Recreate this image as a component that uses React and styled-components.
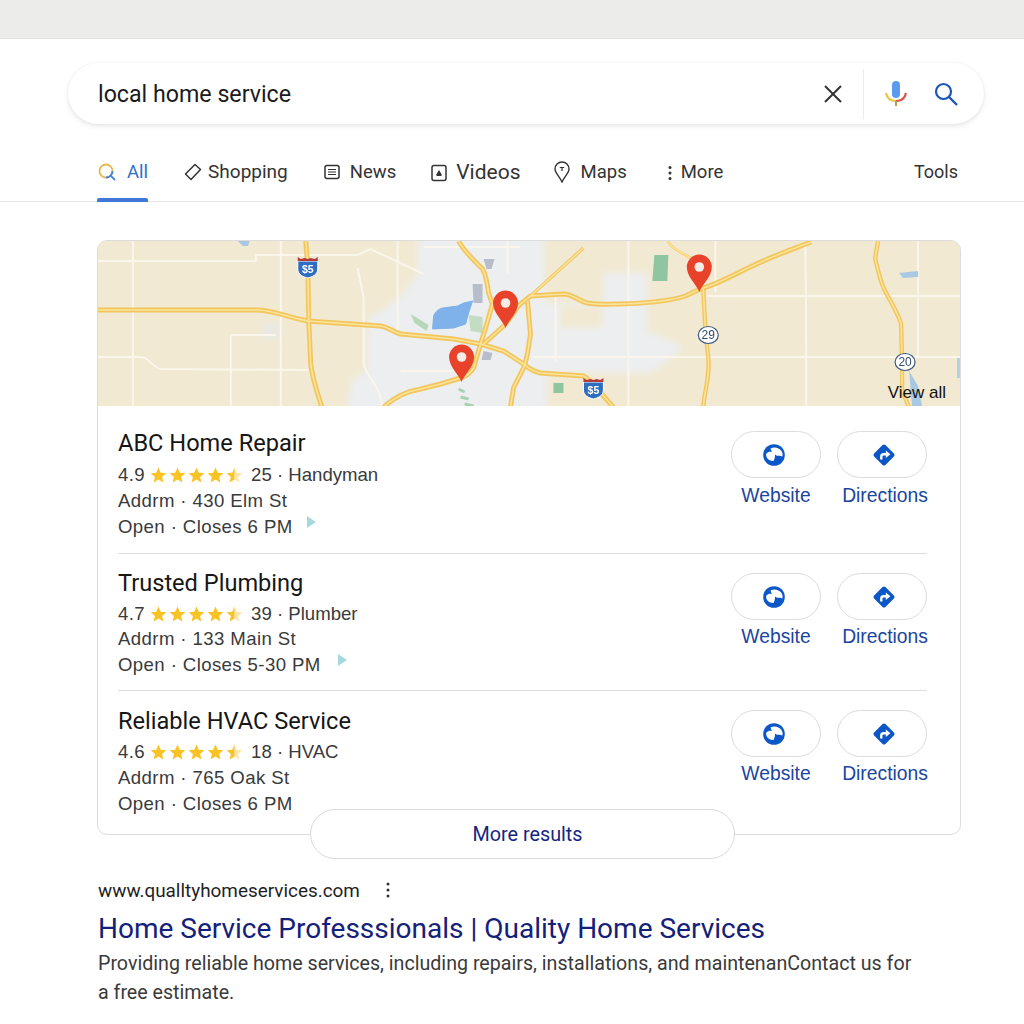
import React from "react";
import styled, { createGlobalStyle } from "styled-components";

const Global = createGlobalStyle`
  html, body { margin: 0; padding: 0; background: #fff; }
  body { font-family: Roboto, "Liberation Sans", sans-serif; color: #222; }
  * { box-sizing: border-box; }
`;

const Page = styled.div`width: 1024px; height: 1024px; overflow: hidden; background: #fff;`;
const TopStrip = styled.div`height: 39px; background: #ececeb; border-bottom: 1px solid #e2e2e2;`;
const SearchWrap = styled.div`padding: 24px 40px 0 68px;`;
const SearchBar = styled.div`
  height: 61px; border-radius: 31px; background: #fff; display: flex; align-items: center;
  padding: 0 26px 0 30px;
  box-shadow: 0 2px 5px rgba(60, 64, 67, 0.13), 0 0 2px rgba(60, 64, 67, 0.05);
`;
const Query = styled.div`flex: 1; font-size: 23.2px; color: #1b1b1b;`;
const ClearBtn = styled.div`display: flex; width: 20px; margin-right: 20px;`;
const VDivider = styled.div`width: 1px; height: 50px; background: #ececec; margin-right: 20px;`;
const MicBtn = styled.div`display: flex; margin-right: 26px;`;
const SearchBtn = styled.div`display: flex;`;

const Tabs = styled.nav`
  height: 78px; display: flex; align-items: flex-start; gap: 36px;
  padding: 30px 66px 0 98px; border-bottom: 1px solid #e6e6e6;
`;
const Tab = styled.div`
  position: relative; height: 48px; display: flex; align-items: flex-start; gap: ${p => p.$gap || 9}px;
  font-size: ${p => p.$size || 18.5}px; line-height: 36px; color: ${p => p.$active ? "#2f6fc9" : "#333"};
  margin-left: ${p => p.$push ? "auto" : `${p.$ml || 0}px`};
  svg { margin-top: ${p => p.$iconTop ?? 9}px; flex: none; }
`;
const Underline = styled.div`
  position: absolute; left: -1px; right: 0; bottom: 0; height: 4px; border-radius: 2px 2px 0 0; background: #3f78d8;
`;

const Main = styled.main`padding: 38px 63px 0 97px;`;
const Card = styled.section`border: 1px solid #dcdcdc; border-radius: 10px; overflow: hidden; background: #fff;`;
const MapWrap = styled.div`position: relative; height: 165px; background: #f1e9d2; overflow: hidden;`;
const MapSvg = styled.svg`display: block; width: 100%; height: 100%; filter: blur(0.4px);`;
const ViewAll = styled.div`position: absolute; right: 14px; bottom: 3px; font: 17px/20px "Liberation Sans", sans-serif; color: #111;`;

const Row = styled.article`
  height: ${p => p.$h}px; margin: 0 33px 0 20px; display: flex; justify-content: space-between;
  padding-top: ${p => p.$top}px; border-bottom: ${p => p.$last ? "none" : "1px solid #dedede"};
`;
const Info = styled.div`display: flex; flex-direction: column;`;
const Name = styled.h3`margin: 0 0 ${p => p.$mb}px; font-size: 23.6px; line-height: 30px; font-weight: 400; color: #161616;`;
const Line = styled.div`
  display: flex; align-items: center; font: 18.6px/26px "Liberation Sans", sans-serif; color: #3a3a3a; letter-spacing: 0.4px;
  margin-bottom: ${p => p.$mb || 0}px;
`;
const Rest = styled.span`letter-spacing: 0;`;
const Stars = styled.span`display: inline-flex; margin: 0 7px 0 4px;`;
const Arrow = styled.span`
  display: inline-block; margin: -10px 0 0 ${p => p.$gap || 15}px;
  border-left: 9px solid #a6d8de; border-top: 6px solid transparent; border-bottom: 6px solid transparent;
`;
const Actions = styled.div`display: flex; gap: 16px; margin-top: ${p => p.$mt}px;`;
const Action = styled.div`display: flex; flex-direction: column; align-items: center; width: 90px;`;
const Pill = styled.div`
  width: 90px; height: 47px; border: 1px solid #dcdcdc; border-radius: 24px; background: #fff;
  display: flex; align-items: center; justify-content: center;
  padding-left: ${p => p.$dx > 0 ? p.$dx * 2 : 0}px; padding-right: ${p => p.$dx < 0 ? -p.$dx * 2 : 0}px;
`;
const ActionLabel = styled.div`
  margin: ${p => p.$gap}px 0 0 ${p => p.$shift || 0}px; font: 19.3px/22px "Liberation Sans", sans-serif; color: #1a45a0; white-space: nowrap;
`;

const MoreWrap = styled.div`position: relative; display: flex; justify-content: center; margin-top: -26px; padding-right: 13px;`;
const MoreBtn = styled.div`
  width: 425px; height: 50px; border: 1px solid #d9d9d9; border-radius: 25px; background: #fff; padding-left: 10px;
  display: flex; align-items: center; justify-content: center; font-size: 19.8px; color: #16257f;
`;

const Result = styled.div`margin: 17px 0 0 1px;`;
const UrlRow = styled.div`display: flex; align-items: center; gap: 26px; height: 28px;`;
const Url = styled.div`font-size: 18.9px; color: #1f1f1f;`;
const Title = styled.h2`margin: 7px 0 0; font-size: 28px; line-height: 36px; font-weight: 400; color: #14217a; white-space: nowrap;`;
const Snippet = styled.p`margin: 2px 0 0; width: 825px; font-size: 19.65px; line-height: 29px; color: #3a3a3a;`;

const StarIcon = ({ half }) => (
  <svg width="19" height="18" viewBox="0 0 24 24">
    {half ? (
      <>
        <path d="M12 2l3 6.9 7.5.7-5.7 5 1.7 7.4L12 18z" fill="#fbe7ae" />
        <path d="M12 2L9 8.9l-7.5.7 5.7 5-1.7 7.4L12 18z" fill="#f9c326" />
      </>
    ) : (
      <path d="M12 2l3 6.9 7.5.7-5.7 5 1.7 7.4L12 18l-6.5 4 1.7-7.4-5.7-5L9 8.9z" fill="#f9c326" />
    )}
  </svg>
);
const Rating = () => (
  <Stars>
    <StarIcon /><StarIcon /><StarIcon /><StarIcon /><StarIcon half />
  </Stars>
);
const GlobeIcon = () => (
  <svg width="22" height="22" viewBox="0 0 22 22">
    <circle cx="11" cy="11" r="10.8" fill="#0b57c8" />
    <path d="M3 10 C5 7.5 7.5 7.5 9 8 C8.5 7 8 6 7.5 4.5 C11 2.5 16 3.5 18.5 7 C19.8 9 19.8 11 19.3 12.5 C17.5 11 15 12 13.5 11.5 L12 10.5 C12.2 13 11.5 15 10.5 17 C8 17 5 16 3.5 13z" fill="#fff" />
  </svg>
);
const DirIcon = () => (
  <svg width="24" height="24" viewBox="0 0 24 24">
    <rect x="4" y="4" width="16" height="16" rx="2" transform="rotate(45 12 12)" fill="#0b57c8" />
    <path d="M9.3 16.5 V13.5 C9.3 12 10.3 11.3 11.8 11.3 H14.5" fill="none" stroke="#fff" strokeWidth="2.4" />
    <path d="M13.8 7.4 L18.4 11.3 L13.8 15z" fill="#fff" />
  </svg>
);
const Dots = ({ h = 18, color = "#333" }) => (
  <svg width="4" height={h} viewBox={`0 0 4 ${h}`}>
    <circle cx="2" cy="3" r="1.5" fill={color} />
    <circle cx="2" cy={h / 2} r="1.5" fill={color} />
    <circle cx="2" cy={h - 3} r="1.5" fill={color} />
  </svg>
);

const yellowRoads = [
  { w: 5, d: "M97 309 L257 309 C275 310 290 317 307 320 L380 325 C388 326 392 331 400 333 L453 338 L480 343 L503 350 L523 363 C530 369 535 371 540 372 L583 375 C590 378 600 392 613 406" },
  { w: 5, d: "M305 240 L307 265 L308 320 L310 363 C312 380 317 392 321 406" },
  { w: 5, d: "M458 240 C463 250 472 258 482 268 C486 275 487 285 488 292 L492 303 L485 327 L480 343 L473 367 C470 372 466 375 460 377 L440 383 L420 388 C408 390 395 395 383 406" },
  { w: 5, d: "M483 343 L503 325 C510 318 516 306 520 303 L530 295 L563 293 C572 293 578 300 587 302 C600 304 612 303 620 303 C640 303 670 300 685 295 L700 288 C715 284 735 273 750 266 C770 256 790 249 811 241" },
  { w: 3.4, d: "M583 247 L530 295" },
  { w: 5, d: "M527 300 L530 333 C528 345 527 358 523 367 L513 387 L510 406" },
  { w: 4.4, d: "M703 288 L705 327 L708 357 C710 375 704 390 703 406" },
  { w: 4.4, d: "M878 240 L875 257 C878 270 880 280 884 288 C890 300 898 312 901 323 L902 357 L902 390 L909 406" },
  { w: 2.6, d: "M667 240 C672 248 682 252 694 259" },
];
const whiteRoads = [
  "M132 240 V406", "M280 240 V406", "M230 334 V406", "M397 240 V332", "M628 240 V406", "M805 240 C806 270 806 300 806 406",
  "M715 240 V291", "M918 240 V356", "M97 260 H255 V254 H357 L370 248 L423 273",
  "M97 356 H140 C150 357 150 366 160 368 L307 369",
  "M230 334 H275", "M707 295 H961", "M533 356 H961",
  "M357 267 L363 297 L363 363 C365 375 380 385 382 406",
  "M555 296 V360", "M400 370 H470", "M423 246 H520", "M507 240 V272",
];

const Pin = ({ x, y }) => (
  <g transform={`translate(${x} ${y})`}>
    <path d="M0 25 C-3 17 -12.5 10 -12.5 0 A12.5 12.5 0 0 1 12.5 0 C12.5 10 3 17 0 25z" fill="#e8432a" />
    <circle r="4.8" fill="#f6ece6" />
  </g>
);
const Interstate = ({ x, y }) => (
  <g transform={`translate(${x} ${y})`}>
    <path d="M-10 -5 H10 V3 C10 9 4 11 0 12 C-4 11 -10 9 -10 3z" fill="#2f6dc0" stroke="#fff" strokeWidth="1" />
    <path d="M-10 -9 L-7 -7 L-3 -8 L0 -7 L3 -8 L7 -7 L10 -9 V-5 H-10z" fill="#b53a36" />
    <text x="0" y="7" textAnchor="middle" fontFamily="Liberation Sans" fontWeight="700" fontSize="10.5" fill="#fff">$5</text>
  </g>
);
const RouteSign = ({ x, y, n }) => (
  <g transform={`translate(${x} ${y})`}>
    <ellipse rx="10" ry="8.5" fill="#fff" stroke="#3f5b83" strokeWidth="1.2" />
    <text x="0" y="4.4" textAnchor="middle" fontFamily="Liberation Sans" fontSize="12" fill="#34496b">{n}</text>
  </g>
);

const MapDrawing = () => (
  <MapSvg viewBox="97 240 863 165" preserveAspectRatio="none">
    <defs>
      <filter id="soft" x="-10%" y="-10%" width="120%" height="120%"><feGaussianBlur stdDeviation="3" /></filter>
    </defs>
    <rect x="90" y="230" width="880" height="185" fill="#f1e9d2" />
    <g filter="url(#soft)">
      <path d="M417 230 H543 L545 302 H603 V272 L647 272 V330 L682 345 L678 352 L650 372 H547 V415 H345 L352 378 L367 370 V318 L395 300 L417 275z" fill="#eceef0" />
      <rect x="560" y="305" width="42" height="22" fill="#f1e9d2" />
      <rect x="262" y="322" width="18" height="16" fill="#e9e9e4" />
    </g>
    {whiteRoads.map((d, i) => <path key={i} d={d} fill="none" stroke="#faf6ec" strokeWidth="2" />)}
    <path d="M432 328 L433 315 C435 310 438 308 442 307 L457 305 L463 302 L472 300 L468 312 L465 323 L453 327z" fill="#7fb1ea" stroke="#7fb1ea" strokeLinejoin="round" />
    <path d="M237 240 H249 L247 245 H242z" fill="#a9c8e4" />
    <path d="M899 272 L918 270 V276 L903 277z" fill="#a9c8e4" />
    <path d="M909 370 L918 385 L922 405 H912z" fill="#a9c8e4" />
    <path d="M957 357 H961 V377 H957z" fill="#b7cfe4" />
    <path d="M654 254 H668 L667 280 H652z" fill="#8fc6a0" />
    <rect x="553" y="382" width="10" height="10" fill="#8fc6a0" />
    <path d="M410 313 L428 324 L426 330 L414 322z" fill="#b6d8b8" />
    <path d="M468 314 L482 316 V332 L470 330z" fill="#c3ddc4" />
    <path d="M458 388 L464 391 M460 396 L468 398 M464 403 L473 405" stroke="#a9d2b2" strokeWidth="3" fill="none" />
    <path d="M483 258 H494 L491 268 H486z" fill="#b8bdcc" />
    <path d="M472 283 H482 V302 H473z" fill="#b8bdcc" />
    <path d="M483 350 L492 352 L490 359 H481z" fill="#b8bdcc" />
    {yellowRoads.map((r, i) => <path key={i} d={r.d} fill="none" stroke="#f2c65c" strokeWidth={r.w} />)}
    {yellowRoads.map((r, i) => <path key={i} d={r.d} fill="none" stroke="#fbe39b" strokeWidth="1.6" />)}
    <Interstate x={307} y={265} />
    <Interstate x={593} y={386} />
    <RouteSign x={708} y={334} n="29" />
    <RouteSign x={905} y={361} n="20" />
    <Pin x={505} y={302} />
    <Pin x={461} y={356} />
    <Pin x={699} y={266} />
  </MapSvg>
);

const places = [
  { name: "ABC Home Repair", score: "4.9", rest: "25 · Handyman", addr: "Addrm · 430 Elm St", open: "Open · Closes 6 PM", arrow: 14, h: 148, top: 22, mt: 3, nm: 4, rm: 0, lg: 7 },
  { name: "Trusted Plumbing", score: "4.7", rest: "39 · Plumber", addr: "Addrm · 133 Main St", open: "Open · Closes 5-30 PM", arrow: 17, h: 137, top: 14, mt: 5, nm: 3, rm: -1, lg: 6 },
  { name: "Reliable HVAC Service", score: "4.6", rest: "18 · HVAC", addr: "Addrm · 765 Oak St", open: "Open · Closes 6 PM", h: 143, top: 15, mt: 4, nm: 3, rm: 0, lg: 6, last: true },
];

export default function App() {
  return (
    <Page>
      <Global />
      <TopStrip />
      <SearchWrap>
        <SearchBar>
          <Query>local home service</Query>
          <ClearBtn>
            <svg width="20" height="20" viewBox="0 0 20 20"><path d="M2 2 L18 18 M18 2 L2 18" stroke="#333" strokeWidth="2" /></svg>
          </ClearBtn>
          <VDivider />
          <MicBtn>
            <svg width="24" height="28" viewBox="0 0 24 28">
              <rect x="8" y="1" width="8" height="17" rx="4" fill="#5b9bee" />
              <path d="M2 13 C3 18 6 21 12 21" fill="none" stroke="#f0c542" strokeWidth="2.2" />
              <path d="M12 21 C18 21 21 18 22 13" fill="none" stroke="#d9534a" strokeWidth="2.2" />
              <path d="M12 21 V26" stroke="#a8a04e" strokeWidth="2" />
            </svg>
          </MicBtn>
          <SearchBtn>
            <svg width="24" height="24" viewBox="0 0 24 24"><circle cx="9.5" cy="9.5" r="7.5" fill="none" stroke="#1a56b8" strokeWidth="2.2" /><path d="M15 15 L23 23" stroke="#1a56b8" strokeWidth="2.4" /></svg>
          </SearchBtn>
        </SearchBar>
      </SearchWrap>
      <Tabs>
        <Tab $active $gap={11}>
          <svg width="18" height="18" viewBox="0 0 18 18">
            <circle cx="8" cy="8" r="6.5" fill="none" stroke="#e5b94e" strokeWidth="1.8" />
            <path d="M14.5 8 A6.5 6.5 0 0 1 8 14.5" fill="none" stroke="#4a86d8" strokeWidth="1.8" />
            <path d="M12.5 12.5 L17 17" stroke="#4a86d8" strokeWidth="1.8" />
          </svg>
          All
          <Underline />
        </Tab>
        <Tab $gap={6} $size={19}>
          <svg width="18" height="18" viewBox="0 0 18 18">
            <path d="M11 1.5 L16.5 6.5 L7 16.5 L1.5 11z" fill="none" stroke="#333" strokeWidth="1.5" strokeLinejoin="round" />
          </svg>
          Shopping
        </Tab>
        <Tab $gap={10}>
          <svg width="16" height="16" viewBox="0 0 16 16" style={{ marginTop: 10 }}>
            <rect x="1" y="1.5" width="14" height="13" rx="2" fill="none" stroke="#333" strokeWidth="1.5" />
            <path d="M4 5.5 H12 M4 8 H12 M4 10.5 H12" stroke="#333" strokeWidth="1.2" />
          </svg>
          News
        </Tab>
        <Tab $gap={9} $size={21} $ml={-1}>
          <svg width="16" height="18" viewBox="0 0 16 18" style={{ marginTop: 10 }}>
            <rect x="1" y="1.5" width="14" height="15" rx="2" fill="none" stroke="#333" strokeWidth="1.5" />
            <path d="M8 7 L6 10.5 H10z M5.5 11.5 H10.5" stroke="#333" strokeWidth="1.1" fill="#333" />
          </svg>
          Videos
        </Tab>
        <Tab $gap={11} $ml={-3}>
          <svg width="16" height="22" viewBox="0 0 16 22" style={{ marginTop: 7 }}>
            <path d="M8 21 C6 16 1 12 1 8 A7 7 0 0 1 15 8 C15 12 10 16 8 21z" fill="none" stroke="#333" strokeWidth="1.4" />
            <path d="M5.8 6.5 H10.2 M8 6.5 V10" stroke="#333" strokeWidth="1.2" />
          </svg>
          Maps
        </Tab>
        <Tab $gap={9} $ml={5}>
          <svg width="4" height="16" viewBox="0 0 4 16" style={{ marginTop: 11 }}>
            <circle cx="2" cy="2.5" r="1.5" fill="#333" /><circle cx="2" cy="8" r="1.5" fill="#333" /><circle cx="2" cy="13.5" r="1.5" fill="#333" />
          </svg>
          More
        </Tab>
        <Tab $push $size={18}>Tools</Tab>
      </Tabs>
      <Main>
        <Card>
          <MapWrap>
            <MapDrawing />
            <ViewAll>View all</ViewAll>
          </MapWrap>
          {places.map(p => (
            <Row key={p.name} $h={p.h} $top={p.top} $last={p.last}>
              <Info>
                <Name $mb={p.nm}>{p.name}</Name>
                <Line $mb={p.rm}>{p.score}<Rating /><Rest>{p.rest}</Rest></Line>
                <Line>{p.addr}</Line>
                <Line>{p.open}{p.arrow && <Arrow $gap={p.arrow} />}</Line>
              </Info>
              <Actions $mt={p.mt}>
                <Action><Pill $dx={-2}><GlobeIcon /></Pill><ActionLabel $gap={p.lg}>Website</ActionLabel></Action>
                <Action><Pill $dx={2}><DirIcon /></Pill><ActionLabel $gap={p.lg} $shift={6}>Directions</ActionLabel></Action>
              </Actions>
            </Row>
          ))}
        </Card>
        <MoreWrap><MoreBtn>More results</MoreBtn></MoreWrap>
        <Result>
          <UrlRow><Url>www.qualltyhomeservices.com</Url><Dots /></UrlRow>
          <Title>Home Service Professsionals | Quality Home Services</Title>
          <Snippet>Providing reliable home services, including repairs, installations, and maintenanContact us for a free estimate.</Snippet>
        </Result>
      </Main>
    </Page>
  );
}
